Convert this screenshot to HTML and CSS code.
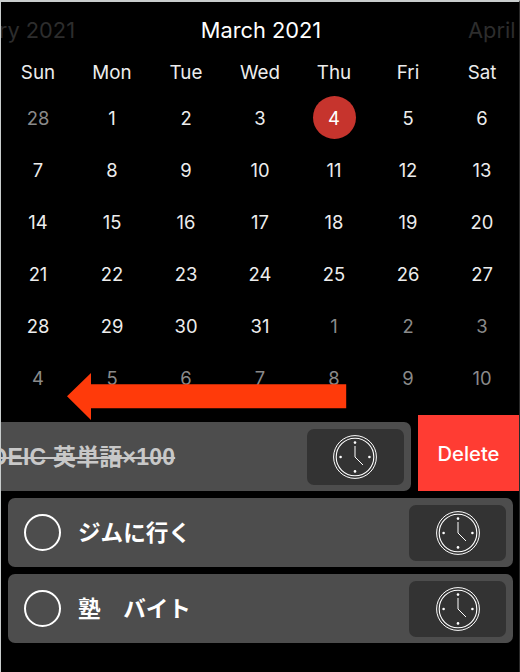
FILE: index.html
```
<!DOCTYPE html>
<html lang="ja">
<head>
<meta charset="utf-8">
<title>Calendar</title>
<link rel="stylesheet" href="styles.css">
</head>
<body>
<svg class="defs" width="0" height="0" aria-hidden="true">
  <symbol id="clock" viewBox="0 0 46 46">
    <g fill="none" stroke="#fff">
      <circle cx="23" cy="23" r="21.4" stroke-width="1"/>
      <circle cx="23" cy="23" r="18.8" stroke-width="1.1"/>
      <path d="M23 12v11l8 8" stroke-width="1"/>
    </g>
    <g fill="#fff">
      <circle cx="23" cy="8.6" r="1.3"/>
      <circle cx="37.4" cy="23" r="1.3"/>
      <circle cx="23" cy="37.4" r="1.3"/>
      <circle cx="8.6" cy="23" r="1.3"/>
    </g>
  </symbol>
</svg>
<main class="app">
  <header class="months">
    <span class="month side prev">February 2021</span>
    <span class="month">March 2021</span>
    <span class="month side next">April 2021</span>
  </header>
  <div class="weekdays">
    <span>Sun</span><span>Mon</span><span>Tue</span><span>Wed</span><span>Thu</span><span>Fri</span><span>Sat</span>
  </div>
  <div class="days">
    <span class="out">28</span><span>1</span><span>2</span><span>3</span><span class="today">4</span><span>5</span><span>6</span>
    <span>7</span><span>8</span><span>9</span><span>10</span><span>11</span><span>12</span><span>13</span>
    <span>14</span><span>15</span><span>16</span><span>17</span><span>18</span><span>19</span><span>20</span>
    <span>21</span><span>22</span><span>23</span><span>24</span><span>25</span><span>26</span><span>27</span>
    <span>28</span><span>29</span><span>30</span><span>31</span><span class="out">1</span><span class="out">2</span><span class="out">3</span>
    <span class="out">4</span><span class="out">5</span><span class="out">6</span><span class="out">7</span><span class="out">8</span><span class="out">9</span><span class="out">10</span>
  </div>
  <ul class="tasks">
    <li class="cell swiped">
      <div class="card">
        <span class="check"></span>
        <span class="label done">TOEIC 英単語×100</span>
        <span class="timer"><svg class="clock"><use href="#clock"/></svg></span>
      </div>
      <div class="delete">Delete</div>
    </li>
    <li class="cell">
      <div class="card">
        <span class="check"></span>
        <span class="label">ジムに行く</span>
        <span class="timer"><svg class="clock"><use href="#clock"/></svg></span>
      </div>
    </li>
    <li class="cell">
      <div class="card">
        <span class="check"></span>
        <span class="label">塾　バイト</span>
        <span class="timer"><svg class="clock"><use href="#clock"/></svg></span>
      </div>
    </li>
  </ul>
  <svg class="arrow" viewBox="0 0 280 47"><path d="M0 23.2 24 0v11.3h255.2v24H24V47z" fill="#ff3a0a"/></svg>
</main>
</body>
</html>
```
FILE: styles.css
```
* { box-sizing: border-box; }

body {
  margin: 0;
  background: #000;
  color: #fff;
  font-family: Inter, "Noto Sans CJK JP", sans-serif;
}

.defs { position: absolute; }

.app {
  position: relative;
  width: 520px;
  height: 672px;
  overflow: hidden;
  border: solid #c9cdcd;
  border-width: 2px 1px 0 1px;
  border-right-color: #2a2a2a;
}

.months {
  display: grid;
  grid-template-columns: 150px 1fr 150px;
  height: 54px;
  line-height: 56px;
  font-size: 21.8px;
  white-space: nowrap;
  text-align: center;
}

.month:not(.side) { padding-left: 2px; }

.side { color: #2d2d2d; }

.prev {
  display: flex;
  justify-content: flex-end;
  padding-right: 76px;
}

.next {
  padding-left: 99px;
  text-align: left;
  overflow: hidden;
  width: 150px;
  word-spacing: 10px;
}

.weekdays,
.days {
  display: grid;
  grid-template-columns: repeat(7, 1fr);
  text-align: center;
}

.weekdays {
  height: 34px;
  line-height: 33px;
  font-size: 18.8px;
  color: #ededed;
}

.days {
  grid-auto-rows: 52px;
  height: 325px;
  line-height: 56px;
  font-size: 18.4px;
  color: #ededed;
}

.days .out { color: #8a8a8a; }

.days .today {
  justify-self: center;
  align-self: center;
  width: 43px;
  height: 43px;
  margin-top: 3px;
  line-height: 44px;
  border-radius: 50%;
  background: #c6342d;
  color: #fff;
}

.tasks {
  margin: 0;
  padding: 0;
  list-style: none;
}

.cell {
  display: flex;
  width: 518px;
  height: 76px;
}

.swiped { margin-left: -102.5px; width: 621px; }

.card {
  display: flex;
  flex: none;
  align-items: center;
  width: 505px;
  height: 69px;
  margin: 7px 7px 0;
  padding: 0 7px 0 16px;
  border-radius: 7px;
  background: #4d4d4d;
}

.check {
  width: 37px;
  height: 37px;
  border: 2px solid #fff;
  border-radius: 50%;
}

.label {
  flex: 1;
  margin-left: 17px;
  padding-bottom: 3px;
  font-size: 22.6px;
  font-weight: 700;
  white-space: nowrap;
}

.done {
  font-family: "Liberation Sans", "Noto Sans CJK JP", sans-serif;
  font-size: 23px;
  letter-spacing: .2px;
  color: #c8c8c8;
  text-decoration: line-through;
  text-decoration-thickness: 2px;
}

.timer {
  display: flex;
  align-items: center;
  justify-content: center;
  width: 97px;
  height: 56px;
  border-radius: 7px;
  background: #333;
}

.clock { width: 46px; height: 46px; }

.delete {
  width: 103px;
  line-height: 77px;
  background: #ff3c33;
  text-align: center;
  font-size: 20.2px;
  font-weight: 500;
}

.arrow {
  position: absolute;
  left: 66px;
  top: 371px;
  width: 280px;
  height: 47px;
}
```
